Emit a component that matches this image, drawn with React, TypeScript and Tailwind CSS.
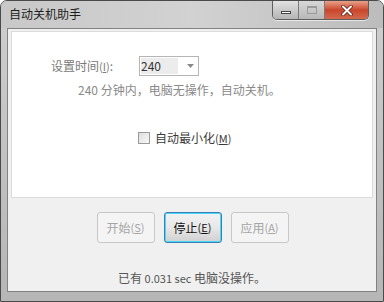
const font = { fontFamily: '"Noto Sans CJK SC", "Noto Sans", sans-serif' }

const TitleButtons = () => (
  <div className="flex h-[19px] mr-[14px] border border-t-0 border-[#5e5e5e] rounded-b-[5px] overflow-hidden shadow-[0_1px_0_rgba(255,255,255,0.6)]">
    <div className="w-[26px] flex items-center justify-center bg-gradient-to-b from-[#e2e2e2] to-[#b4b4b4] border-r border-[#7a7a7a]">
      <div className="w-[10px] h-[3px] bg-white border border-[#444] mt-[5px]" />
    </div>
    <div className="w-[26px] flex items-center justify-center bg-gradient-to-b from-[#d8d8d8] to-[#b8b8b8] border-r border-[#7a7a7a]">
      <div className="w-[10px] h-[8px] border border-[#9a9a9a] border-t-2" />
    </div>
    <div className="w-[43px] flex items-center justify-center bg-gradient-to-b from-[#e8a08a] via-[#c9452b] to-[#d26a4e]">
      <svg width="12" height="11" viewBox="0 0 12 11">
        <path d="M2 1.5 L10 9.5 M10 1.5 L2 9.5" stroke="#5a1a10" strokeWidth="3.4" strokeLinecap="round" />
        <path d="M2 1.5 L10 9.5 M10 1.5 L2 9.5" stroke="#ffffff" strokeWidth="2" strokeLinecap="round" />
      </svg>
    </div>
  </div>
)

const Mn = ({ c }: { c: string }) => (
  <span className="text-[11px]">(<span className="underline">{c}</span>)</span>
)

export default function App() {
  return (
    <div
      className="w-[384px] h-[302px] flex flex-col border border-[#4a4a4a] rounded-t-[7px] bg-gradient-to-b from-[#cfcfcf] via-[#c2c2c2] to-[#b6b6b6]"
      style={font}
    >
      {/* Title bar */}
      <div className="h-[27px] flex justify-between items-start bg-gradient-to-r from-[#c8c8c8] via-[#d2d2d2] to-[#bcbcbc] rounded-t-[6px]">
        <div className="pl-[8px] pt-[5px] text-[12px] leading-[16px] text-[#1e1e1e]">自动关机助手</div>
        <TitleButtons />
      </div>

      {/* Client area */}
      <div className="mx-[6px] h-[264px] border border-[#828282] bg-[#f0f0f0] flex flex-col">
        {/* White panel */}
        <div className="mx-[3px] mt-[2px] h-[167px] bg-white border border-[#dcdcdc] flex flex-col text-[12px]">
          <div className="flex items-center pl-[39px] pt-[24px]">
            <span className="w-[88px] text-[#7a7a7a] leading-[16px]">
              设置时间<Mn c="I" />:
            </span>
            <div className="w-[60px] h-[20px] border border-[#b5b5b5] flex items-center">
              <div className="w-[37px] h-[16px] ml-[1px] bg-[#ececec] text-[12px] leading-[16px] text-[#333]">240</div>
              <div className="flex-1 flex justify-end pr-[4px]">
                <svg width="7" height="4" viewBox="0 0 7 4"><path d="M0 0 H7 L3.5 4 Z" fill="#8a8a8a" /></svg>
              </div>
            </div>
          </div>
          <div className="pl-[66px] mt-[6px] text-[#8a8a8a] leading-[16px]">
            240 分钟内，电脑无操作，自动关机。
          </div>
          <div className="flex items-center pl-[126px] mt-[32px]">
            <div className="w-[12px] h-[12px] border border-[#9a9a9a] bg-gradient-to-br from-[#dedede] to-[#f8f8f8]" />
            <span className="ml-[5px] text-[#3a3a3a] leading-[16px]">
              自动最小化<Mn c="M" />
            </span>
          </div>
        </div>

        {/* Buttons */}
        <div className="flex justify-center gap-[9px] mt-[14px] text-[12px] pl-[1px]">
          <div className="w-[58px] h-[31px] border border-[#c8c8c8] rounded-[3px] bg-[#f4f4f4] flex items-center justify-center text-[#a5a5a5]">
            开始<Mn c="S" />
          </div>
          <div className="w-[58px] h-[31px] border border-[#3c7fb1] rounded-[3px] bg-gradient-to-b from-[#f2f2f2] via-[#e8e8e8] to-[#d0d0d0] flex items-center justify-center text-[#111] shadow-[inset_0_0_0_1px_#48d8fb]">
            停止<Mn c="E" />
          </div>
          <div className="w-[58px] h-[31px] border border-[#c8c8c8] rounded-[3px] bg-[#f4f4f4] flex items-center justify-center text-[#a5a5a5]">
            应用<Mn c="A" />
          </div>
        </div>

        {/* Status */}
        <div className="mt-[27px] text-center text-[12px] leading-[16px] text-[#555]">
          已有 <span className="text-[11px]">0.031 sec</span> 电脑没操作。
        </div>
      </div>
    </div>
  )
}
